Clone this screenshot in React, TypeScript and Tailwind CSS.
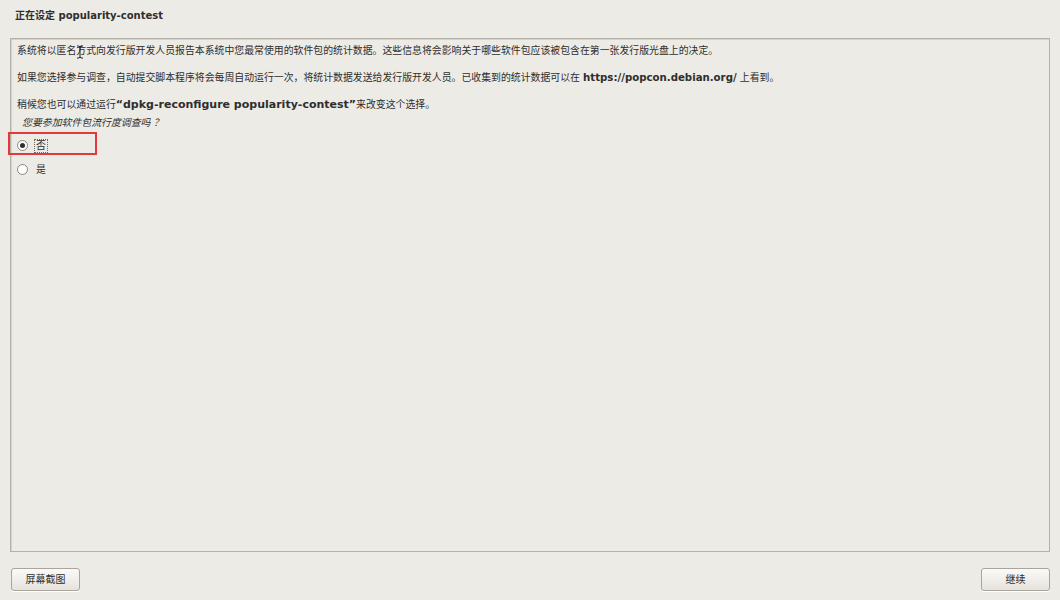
import React from "react";

const font = { fontFamily: '"DejaVu Sans", "Noto Sans CJK SC", sans-serif' };

function Radio({ checked }: { checked?: boolean }) {
  return (
    <span className="flex h-[11px] w-[11px] items-center justify-center rounded-full border border-[#8a8780] bg-white">
      {checked && <span className="h-[5px] w-[5px] rounded-full bg-[#2e2e2e]" />}
    </span>
  );
}

function Button({ label }: { label: string }) {
  return (
    <button className="flex h-[23px] w-[69px] items-center justify-center rounded-[3px] border border-[#a9a59d] bg-gradient-to-b from-[#fbfaf8] to-[#e6e3dd] text-[10px] text-[#2e2e2e] shadow-[0_1px_0_#fff]">
      {label}
    </button>
  );
}

export default function App() {
  return (
    <div
      className="flex h-[600px] w-[1060px] flex-col bg-[#edebe5] text-[#2e2e2e]"
      style={font}
    >
      {/* Title */}
      <div className="h-[38px] px-[15px] pt-[9px] text-[10px] font-bold leading-[14px]">
        正在设定 popularity-contest
      </div>

      {/* Main panel */}
      <div className="relative mx-[10px] mb-[-1px] flex-1 border border-[#b5b1a9] bg-[#edebe5] px-[6px] pt-[5px] text-[9.9px] leading-[14px] shadow-[inset_1px_1px_0_#d6d3cc]">
        <p className="mb-[13px]">
          系统将以匿名方式向发行版开发人员报告本系统中您最常使用的软件包的统计数据。这些信息将会影响关于哪些软件包应该被包含在第一张发行版光盘上的决定。
        </p>
        <p className="mb-[13px]">
          如果您选择参与调查，自动提交脚本程序将会每周自动运行一次，将统计数据发送给发行版开发人员。已收集到的统计数据可以在{" "}
          <span className="text-[10.2px] font-bold">https://popcon.debian.org/</span> 上看到。
        </p>
        <p>
          稍候您也可以通过运行
          <span className="text-[11px] font-bold">“dpkg-reconfigure popularity-contest”</span>
          来改变这个选择。
        </p>
        <p className="mt-[4px] pl-[5px] italic">您要参加软件包流行度调查吗 ？</p>

        <div className="mt-[8px] flex flex-col gap-[9px]">
          <div className="relative flex h-[15px] items-center gap-[6px]">
            <Radio checked />
            <span className="border border-dotted border-[#6a6862] px-[1px] leading-[12px]">否</span>
            {/* annotation box */}
            <span className="absolute left-[-9px] top-[-6px] h-[23px] w-[89px] border-2 border-[#e23a3a]" />
          </div>
          <div className="flex h-[15px] items-center gap-[6px]">
            <Radio />
            <span className="px-[2px]">是</span>
          </div>
        </div>

        {/* mouse I-beam cursor */}
        <svg
          className="absolute left-[65px] top-[6px]"
          width="8"
          height="14"
          viewBox="0 0 8 14"
        >
          <path
            d="M1 1h2l1 1 1-1h2M4 2v10M1 13h2l1-1 1 1h2"
            fill="none"
            stroke="#222"
            strokeWidth="1"
          />
        </svg>
      </div>

      {/* Bottom buttons */}
      <div className="flex h-[49px] items-start justify-between pl-[11px] pr-[10px] pt-[17px]">
        <Button label="屏幕截图" />
        <Button label="继续" />
      </div>
    </div>
  );
}
